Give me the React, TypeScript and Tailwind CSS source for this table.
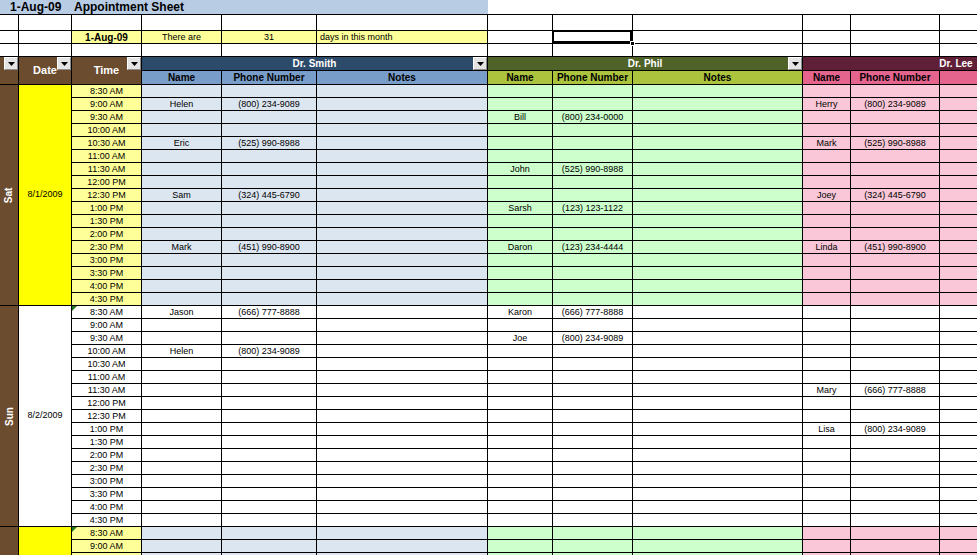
import React from "react";

type Entry = [string, string];
type Block = {
  day: string;
  date: string;
  colored: boolean;
  rows: number;
  smith: Record<number, Entry>;
  phil: Record<number, Entry>;
  lee: Record<number, Entry>;
};

const times = [
  "8:30 AM", "9:00 AM", "9:30 AM", "10:00 AM", "10:30 AM", "11:00 AM", "11:30 AM",
  "12:00 PM", "12:30 PM", "1:00 PM", "1:30 PM", "2:00 PM", "2:30 PM", "3:00 PM",
  "3:30 PM", "4:00 PM", "4:30 PM",
];

const blocks: Block[] = [
  {
    day: "Sat",
    date: "8/1/2009",
    colored: true,
    rows: 17,
    smith: { 1: ["Helen", "(800) 234-9089"], 4: ["Eric", "(525) 990-8988"], 8: ["Sam", "(324) 445-6790"], 12: ["Mark", "(451) 990-8900"] },
    phil: { 2: ["Bill", "(800) 234-0000"], 6: ["John", "(525) 990-8988"], 9: ["Sarsh", "(123) 123-1122"], 12: ["Daron", "(123) 234-4444"] },
    lee: { 1: ["Herry", "(800) 234-9089"], 4: ["Mark", "(525) 990-8988"], 8: ["Joey", "(324) 445-6790"], 12: ["Linda", "(451) 990-8900"] },
  },
  {
    day: "Sun",
    date: "8/2/2009",
    colored: false,
    rows: 17,
    smith: { 0: ["Jason", "(666) 777-8888"], 3: ["Helen", "(800) 234-9089"] },
    phil: { 0: ["Karon", "(666) 777-8888"], 2: ["Joe", "(800) 234-9089"] },
    lee: { 6: ["Mary", "(666) 777-8888"], 9: ["Lisa", "(800) 234-9089"] },
  },
  {
    day: "",
    date: "",
    colored: true,
    rows: 3,
    smith: {},
    phil: {},
    lee: {},
  },
];

function Dropdown() {
  return (
    <div className="absolute top-0 right-0 w-[14px] h-[13px] bg-[#e4e4e4] border border-t-white border-l-white border-b-[#8c8c8c] border-r-[#8c8c8c] flex items-center justify-center">
      <svg width="7" height="4" viewBox="0 0 7 4">
        <polygon points="0,0 7,0 3.5,4" fill="#000" />
      </svg>
    </div>
  );
}

const cell = "border-r border-b border-black";
const data = "border-r border-b border-black text-[9px] leading-[13px] text-center text-black whitespace-nowrap overflow-hidden";

export default function App() {
  return (
    <div className="w-[977px] h-[555px] overflow-hidden bg-white font-['Liberation_Sans',Arial,sans-serif]">
      <div className="grid w-[1110px] grid-cols-[19px_53px_70px_80px_95px_171px_65px_80px_170px_48px_89px_170px] grid-rows-[15px_16px_13px_13px_14px_14px] auto-rows-[13px]">
        {/* Title row */}
        <div className="col-span-6 bg-[#b8cce4] border-b border-black flex items-center text-[12px] font-bold leading-[14px] text-black">
          <span className="w-[74px] pl-[10px]">1-Aug-09</span>
          <span>Appointment Sheet</span>
        </div>
        <div className="col-span-6 border-b border-black bg-white" />

        {/* Row 2 */}
        {Array.from({ length: 12 }).map((_, i) => (
          <div key={"r2" + i} className={cell} />
        ))}

        {/* Row 3 */}
        <div className={cell} />
        <div className={cell} />
        <div className={cell + " bg-[#ffff99] text-[10px] font-bold leading-[13px] text-center"}>1-Aug-09</div>
        <div className={cell + " bg-[#ffff99] text-[9px] leading-[13px] text-center"}>There are</div>
        <div className={cell + " bg-[#ffff99] text-[9px] leading-[13px] text-center"}>31</div>
        <div className={cell + " bg-[#ffff99] text-[9px] leading-[13px] pl-[3px]"}>days in this month</div>
        <div className={cell} />
        <div className={cell + " relative"}>
          <div className="absolute -left-px -top-px right-0 bottom-0 border-2 border-black" />
          <div className="absolute -right-[3px] -bottom-[3px] w-[5px] h-[5px] bg-black border border-white" />
        </div>
        <div className={cell} />
        <div className={cell} />
        <div className={cell} />
        <div className={cell} />

        {/* Row 4 */}
        {Array.from({ length: 12 }).map((_, i) => (
          <div key={"r4" + i} className={cell} />
        ))}

        {/* Header row 1 */}
        <div className={cell + " row-span-2 bg-[#6b4c2f] relative"}>
          <Dropdown />
        </div>
        <div className={cell + " row-span-2 bg-[#6b4c2f] relative flex items-center justify-center text-white text-[11px] font-bold"}>
          <span>Date</span>
          <Dropdown />
        </div>
        <div className={cell + " row-span-2 bg-[#6b4c2f] relative flex items-center justify-center text-white text-[11px] font-bold"}>
          <span>Time</span>
          <Dropdown />
        </div>
        <div className={cell + " col-span-3 bg-[#2c4b6a] relative text-white text-[10px] font-bold leading-[14px] text-center"}>
          Dr. Smith
          <Dropdown />
        </div>
        <div className={cell + " col-span-3 bg-[#4f6228] relative text-white text-[10px] font-bold leading-[14px] text-center"}>
          Dr. Phil
          <Dropdown />
        </div>
        <div className={cell + " col-span-3 bg-[#5f1f37] relative text-white text-[10px] font-bold leading-[14px] text-center"}>
          Dr. Lee
          <Dropdown />
        </div>

        {/* Header row 2 */}
        <div className={cell + " bg-[#789dc9] text-[10px] font-bold leading-[14px] text-center"}>Name</div>
        <div className={cell + " bg-[#789dc9] text-[10px] font-bold leading-[14px] text-center"}>Phone Number</div>
        <div className={cell + " bg-[#789dc9] text-[10px] font-bold leading-[14px] text-center"}>Notes</div>
        <div className={cell + " bg-[#abc33d] text-[10px] font-bold leading-[14px] text-center"}>Name</div>
        <div className={cell + " bg-[#abc33d] text-[10px] font-bold leading-[14px] text-center"}>Phone Number</div>
        <div className={cell + " bg-[#abc33d] text-[10px] font-bold leading-[14px] text-center"}>Notes</div>
        <div className={cell + " bg-[#e4648e] text-[10px] font-bold leading-[14px] text-center"}>Name</div>
        <div className={cell + " bg-[#e4648e] text-[10px] font-bold leading-[14px] text-center"}>Phone Number</div>
        <div className={cell + " bg-[#e4648e]"} />

        {/* Data blocks */}
        {blocks.map((b, bi) => {
          const dateBg = b.colored ? "bg-[#ffff00]" : "bg-white";
          const timeBg = b.colored ? "bg-[#ffff99]" : "bg-white";
          const smithBg = b.colored ? "bg-[#dce6f1]" : "bg-white";
          const philBg = b.colored ? "bg-[#ccffcc]" : "bg-white";
          const leeBg = b.colored ? "bg-[#f9c7d7]" : "bg-white";
          return (
            <React.Fragment key={bi}>
              {times.slice(0, b.rows).map((t, ti) => {
                const s = b.smith[ti];
                const p = b.phil[ti];
                const l = b.lee[ti];
                const showTime = !(bi === 2 && ti >= 2);
                return (
                  <React.Fragment key={ti}>
                    {ti === 0 && (
                      <>
                        <div className={cell + " row-span-17 bg-[#6b4c2f] flex items-center justify-center"}>
                          <span className="-rotate-90 text-white text-[10px] font-bold whitespace-nowrap">{b.day}</span>
                        </div>
                        <div className={cell + " row-span-17 " + dateBg + " flex items-center justify-center text-[9px] text-black"}>
                          {b.date}
                        </div>
                      </>
                    )}
                    <div className={data + " " + timeBg + " relative"}>
                      {ti === 0 && bi > 0 && (
                        <div className="absolute top-0 left-0 w-0 h-0 border-t-[5px] border-t-[#1f7a1f] border-r-[5px] border-r-transparent" />
                      )}
                      {showTime ? t : ""}
                    </div>
                    <div className={data + " " + smithBg}>{s ? s[0] : ""}</div>
                    <div className={data + " " + smithBg}>{s ? s[1] : ""}</div>
                    <div className={data + " " + smithBg} />
                    <div className={data + " " + philBg}>{p ? p[0] : ""}</div>
                    <div className={data + " " + philBg}>{p ? p[1] : ""}</div>
                    <div className={data + " " + philBg} />
                    <div className={data + " " + leeBg}>{l ? l[0] : ""}</div>
                    <div className={data + " " + leeBg}>{l ? l[1] : ""}</div>
                    <div className={data + " " + leeBg} />
                  </React.Fragment>
                );
              })}
            </React.Fragment>
          );
        })}
      </div>
    </div>
  );
}
